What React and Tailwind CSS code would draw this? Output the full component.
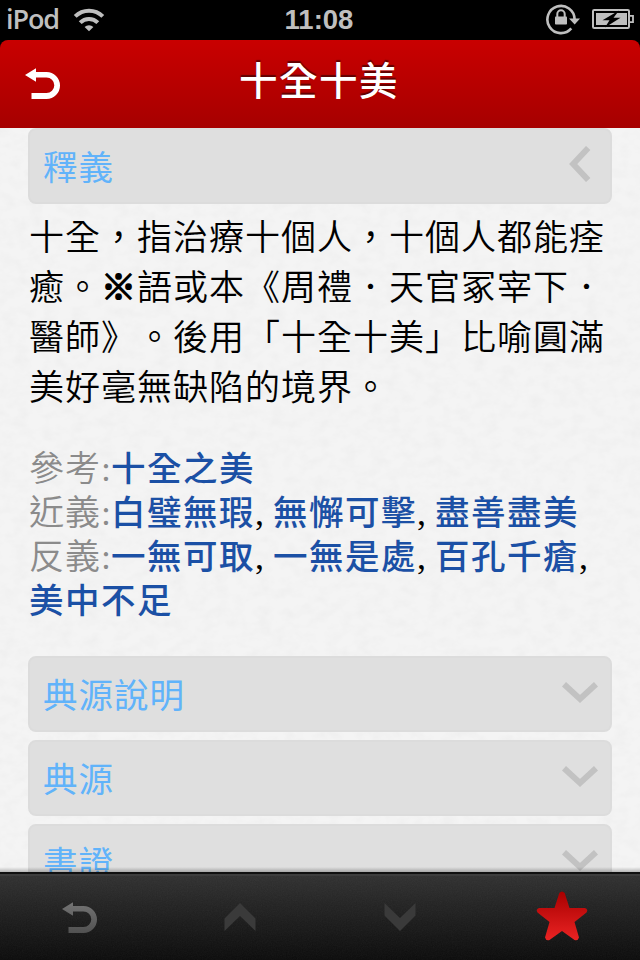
const cjk = "font-['Liberation_Serif','Noto_Sans_CJK_TC',sans-serif]";

function WifiIcon() {
  return (
    <svg width="32" height="24" viewBox="0 0 32 24" fill="none" stroke="#bfbfbf" strokeWidth="4">
      <path d="M2.2 8.4A19.5 19.5 0 0 1 29.8 8.4" />
      <path d="M7.2 14.6A12.4 12.4 0 0 1 24.8 14.6" />
      <path d="M16 23.2l-4.4-4.3a6.4 6.4 0 0 1 8.8 0z" fill="#bfbfbf" stroke="none" />
    </svg>
  );
}

function LockIcon() {
  return (
    <svg width="34" height="32" viewBox="0 0 34 32" fill="none" className="block">
      <path d="M25.3 25.4A13.6 13.6 0 1 1 28.6 16.2" stroke="#bfbfbf" strokeWidth="2.6" />
      <path d="M23 15.5H34L28.7 21.5z" fill="#bfbfbf" />
      <rect x="9" y="13.5" width="12" height="8" rx="0.8" fill="#bfbfbf" />
      <path d="M11.3 14V11a3.7 3.7 0 0 1 7.4 0v3" stroke="#bfbfbf" strokeWidth="2" />
    </svg>
  );
}

function BatteryIcon() {
  return (
    <svg width="42" height="20" viewBox="0 0 42 20" className="-mt-0.5">
      <rect x="1" y="1" width="36" height="18" rx="1.2" fill="none" stroke="#bfbfbf" strokeWidth="2" />
      <path d="M38 6.8H41V13.2H38" fill="none" stroke="#bfbfbf" strokeWidth="1.8" />
      <rect x="4" y="4" width="31" height="12" fill="#bfbfbf" />
      <path d="M27 1.5L10.5 11.2H17.5L13 18.5L28.5 8.8H21.5z" fill="#000" />
    </svg>
  );
}

function BackIcon({ fill = "#fff" }) {
  return (
    <svg width="36" height="32" viewBox="0 0 36 32" className="block">
      <defs>
        <linearGradient id="backGrey" x1="0" y1="0" x2="0" y2="32" gradientUnits="userSpaceOnUse">
          <stop offset="0" stopColor="#747474" />
          <stop offset="1" stopColor="#505050" />
        </linearGradient>
      </defs>
      <path
        d="M0 7L11 0.2V4H21.5A13.4 13.4 0 0 1 21.5 31H6.5V25H21.5A7.7 7.7 0 0 0 21.5 9.4H11V13.8z"
        fill={fill}
      />
    </svg>
  );
}

function DownChevron() {
  return (
    <svg width="36" height="22" viewBox="0 0 36 22" fill="none" stroke="#c2c2c2" strokeWidth="6">
      <path d="M2 2.3L18 16.9L34 2.3" />
    </svg>
  );
}

function LeftChevron() {
  return (
    <svg width="22" height="36" viewBox="0 0 22 36" fill="none" stroke="#c2c2c2" strokeWidth="6">
      <path d="M19.2 2L4.2 18L19.2 34" />
    </svg>
  );
}

function Section({ title, open }) {
  return (
    <div className="flex h-[76px] shrink-0 items-center justify-between rounded-lg border-2 border-[#dcdcdc] bg-[#dfdfdf] pl-[13px]">
      <span className="pt-1 text-[34.5px] font-normal leading-[44px] tracking-[1px] text-[#61b3fa]">{title}</span>
      {open ? (
        <span className="mr-[19px] mb-1"><LeftChevron /></span>
      ) : (
        <span className="mr-3 mb-0.5"><DownChevron /></span>
      )}
    </div>
  );
}

function Paper() {
  return (
    <svg className="absolute inset-0" width="640" height="744">
      <filter id="paper" x="0" y="0" width="100%" height="100%">
        <feTurbulence type="fractalNoise" baseFrequency="0.07 0.1" numOctaves="3" seed="4" />
        <feColorMatrix values="0 0 0 0 0.5  0 0 0 0 0.5  0 0 0 0 0.5  0.17 0 0 0 -0.065" />
      </filter>
      <rect width="640" height="744" filter="url(#paper)" />
    </svg>
  );
}

const Label = ({ children }) => (
  <span className="font-[350] text-[#8b8b8b]">
    <span className="text-[35px] tracking-[1px]">{children}</span>:
  </span>
);
const Term = ({ children }) => (
  <span className="text-[34.5px] font-medium tracking-[1.5px] text-[#1b50a5]">{children}</span>
);

export default function App() {
  return (
    <div className={`flex h-[960px] w-[640px] flex-col overflow-hidden bg-black [text-spacing-trim:space-all] ${cjk}`}>
      <div className="grid h-10 shrink-0 grid-cols-3 items-center pl-[6px] pr-1.5 font-['Liberation_Sans',sans-serif] text-[#bfbfbf]">
        <div className="flex items-center gap-3.5">
          <span className="-mt-0.5 w-[53px] font-['Open_Sans',sans-serif] text-[27px] font-semibold leading-[38px] tracking-[-1.1px]">iPod</span>
          <WifiIcon />
        </div>
        <div className="pr-0.5 text-center text-[27.5px] font-bold leading-10">11:08</div>
        <div className="flex items-center justify-end gap-3">
          <span className="-mt-0.5"><LockIcon /></span>
          <BatteryIcon />
        </div>
      </div>

      <header className="flex h-[88px] shrink-0 items-center rounded-t-lg bg-linear-to-b from-[#c90000] to-[#a60000]">
        <div className="w-[100px] pl-[25px]"><BackIcon /></div>
        <h1 className="flex-1 pb-1 text-center text-[38.5px] font-medium leading-[60px] tracking-[1.5px] text-white [text-shadow:0_-2px_1px_rgba(60,0,0,0.7)]">十全十美</h1>
        <div className="w-[102px]" />
      </header>

      <main className="relative h-[744px] shrink-0 overflow-hidden bg-[#f4f4f4]">
        <Paper />
        <div className="relative flex flex-col px-7">
          <Section title="釋義" open />
          <div className="mt-[10px] whitespace-nowrap pl-px text-[35px] font-[350] leading-[50px] tracking-[1px] text-black">
            <p>十全，指治療十個人，十個人都能痊</p>
            <p>癒。<span className="font-black [-webkit-text-stroke:1.5px_#000]">※</span>語或本《周禮．天官冢宰下．</p>
            <p>醫師》。後用「十全十美」比喻圓滿</p>
            <p>美好毫無缺陷的境界。</p>
          </div>
          <div className="mt-[33px] grid auto-rows-[44px] whitespace-nowrap pl-px text-[36px] leading-[44px] text-black">
            <p><Label>參考</Label><Term>十全之美</Term></p>
            <p><Label>近義</Label><Term>白璧無瑕</Term>, <Term>無懈可擊</Term>, <Term>盡善盡美</Term></p>
            <p><Label>反義</Label><Term>一無可取</Term>, <Term>一無是處</Term>, <Term>百孔千瘡</Term>,</p>
            <p><Term>美中不足</Term></p>
          </div>
          <div className="mt-[33px] flex flex-col gap-2">
            <Section title="典源說明" />
            <Section title="典源" />
            <Section title="書證" />
          </div>
        </div>
        <div className="absolute inset-x-0 bottom-0 h-[5px] bg-linear-to-b from-transparent to-black/25" />
      </main>

      <footer className="relative h-[88px] shrink-0 border-t-2 border-[#101010] bg-linear-to-b from-[#313131] to-[#0b0b0b]">
        <svg className="absolute inset-0 opacity-[0.06]" width="640" height="86">
          <filter id="grain" x="0" y="0" width="100%" height="100%">
            <feTurbulence type="fractalNoise" baseFrequency="0.8" numOctaves="2" />
            <feColorMatrix type="saturate" values="0" />
          </filter>
          <rect width="640" height="86" filter="url(#grain)" />
        </svg>
        <div className="relative grid h-full grid-cols-4 items-center justify-items-center border-t-2 border-[#3d3d3d]">
          <BackIcon fill="url(#backGrey)" />
          <svg width="32" height="28" viewBox="0 0 32 28" fill="#3a3a3a" className="mb-0.5">
            <path d="M0.5 15.5L16 0L31.5 15.5V28L16 13L0.5 28z" />
          </svg>
          <svg width="32" height="28" viewBox="0 0 32 28" fill="#3a3a3a" className="mb-0.5">
            <path d="M0.5 0L16 15L31.5 0V12.5L16 28L0.5 12.5z" />
          </svg>
          <svg width="52" height="50" viewBox="0 0 52 50" className="mb-1 ml-1">
            <defs>
              <linearGradient id="star" x1="0" y1="0" x2="0" y2="1">
                <stop offset="0" stopColor="#a80000" />
                <stop offset="1" stopColor="#ea2323" />
              </linearGradient>
            </defs>
            <path
              d="M23.3 2Q26 -1 28.7 2L33.5 17H49Q52.5 18 50.5 21.5L38.5 31L43 46.5Q42 50 38.5 49L26 40L13.5 49Q10 50 9 46.5L13.5 31L1.5 21.5Q-0.5 18 3 17H18.5z"
              fill="url(#star)"
            />
          </svg>
        </div>
      </footer>
    </div>
  );
}
